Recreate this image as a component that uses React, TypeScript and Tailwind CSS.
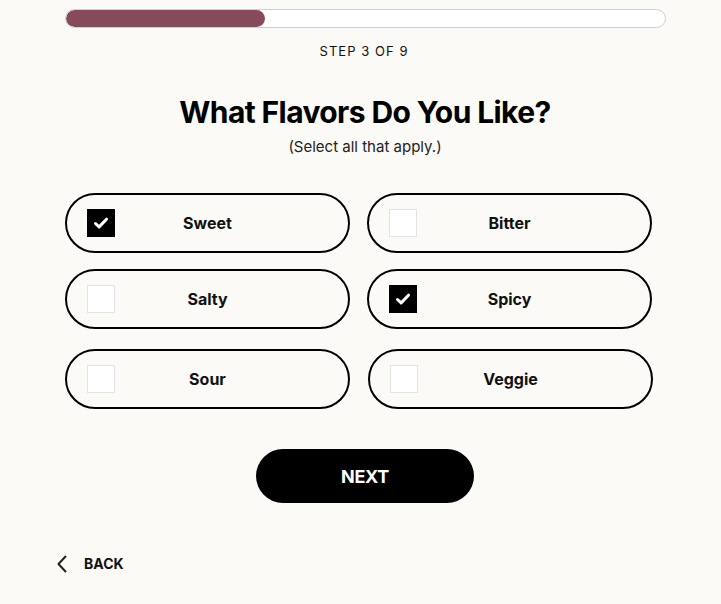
import React, { useState } from "react";

const options = [
  ["Sweet", true],
  ["Bitter", false],
  ["Salty", false],
  ["Spicy", true],
  ["Sour", false],
  ["Veggie", false],
] as const;

function Check() {
  return (
    <svg width="18" height="18" viewBox="0 0 18 18" fill="none">
      <path d="M3.5 9.5l3.6 3.4L14.5 5.2" stroke="white" strokeWidth="3" strokeLinecap="round" strokeLinejoin="round" />
    </svg>
  );
}

function Option({ label, initial }: { label: string; initial: boolean }) {
  const [on, setOn] = useState(initial);
  return (
    <button
      onClick={() => setOn(!on)}
      className="relative flex h-[60px] w-[285px] items-center rounded-full border-2 border-black bg-transparent pl-[20px]"
    >
      <span
        className={
          on
            ? "flex h-[28px] w-[28px] items-center justify-center bg-black"
            : "flex h-[28px] w-[28px] items-center justify-center border border-[#e3e3e3] bg-white"
        }
      >
        {on && <Check />}
      </span>
      <span className="flex-1 pr-[48px] text-center text-[16px] font-bold text-[#111]">{label}</span>
    </button>
  );
}

export default function App() {
  return (
    <div
      className="flex h-[604px] w-[721px] flex-col bg-[#fbfaf7] text-black"
      style={{ fontFamily: "Inter, 'Noto Sans', sans-serif" }}
    >
      <div className="mx-[65px] mt-[9px] h-[19px] w-[601px] overflow-hidden rounded-full border border-[#cfcfcf] bg-white">
        <div className="h-full w-[199px] rounded-full bg-[#874a5a]" />
      </div>
      <div className="mt-[14px] ml-[7px] text-center text-[13px] tracking-[0.08em] text-[#111]">STEP 3 OF 9</div>
      <h1 className="mt-[32px] ml-[9px] text-center text-[30px] font-bold leading-[36px] tracking-[-0.02em]">
        What Flavors Do You Like?
      </h1>
      <div className="mt-[6px] ml-[9px] text-center text-[15px] text-[#222]">(Select all that apply.)</div>
      <div className="mt-[35px] ml-[65px] flex flex-col">
        <div className="flex gap-[17px]">
          <Option label={options[0][0]} initial={options[0][1]} />
          <Option label={options[1][0]} initial={options[1][1]} />
        </div>
        <div className="mt-[16px] flex gap-[17px]">
          <Option label={options[2][0]} initial={options[2][1]} />
          <Option label={options[3][0]} initial={options[3][1]} />
        </div>
        <div className="mt-[20px] flex gap-[18px]">
          <Option label={options[4][0]} initial={options[4][1]} />
          <Option label={options[5][0]} initial={options[5][1]} />
        </div>
      </div>
      <div className="mt-[40px] flex justify-center pl-[9px]">
        <button className="h-[54px] w-[218px] rounded-full bg-black text-[18px] font-bold tracking-[-0.02em] text-white">NEXT</button>
      </div>
      <div className="mt-[50px] ml-[56px] flex items-center gap-[16px]">
        <svg width="12" height="18" viewBox="0 0 12 18" fill="none">
          <path d="M9.5 1.5L2.5 9l7 7.5" stroke="#222" strokeWidth="2" strokeLinecap="round" strokeLinejoin="round" />
        </svg>
        <span className="text-[14px] font-bold text-[#111]">BACK</span>
      </div>
    </div>
  );
}
